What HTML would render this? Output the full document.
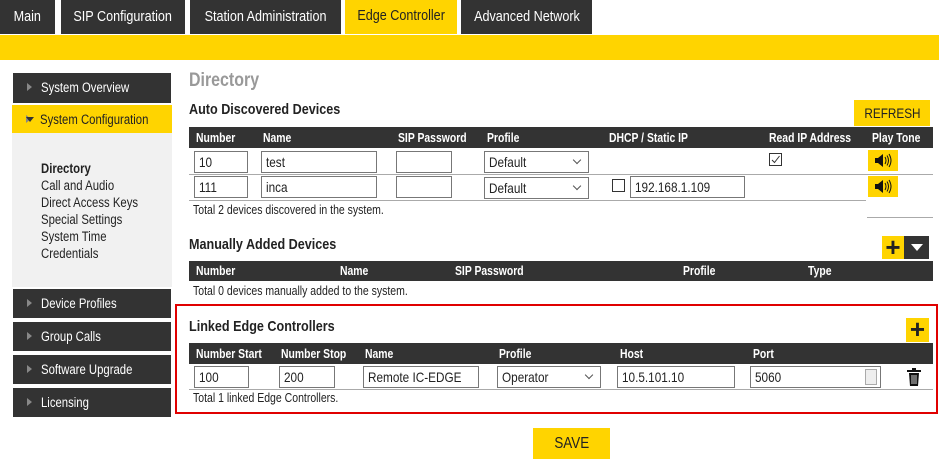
<!DOCTYPE html><html><head><style>
*{box-sizing:border-box;margin:0;padding:0}
body{width:939px;height:463px;background:#fff;position:relative;overflow:hidden;font-family:"Liberation Sans",sans-serif;font-size:13px;color:#222}
.a{position:absolute}
.c{display:inline-block;transform:scaleX(.84);transform-origin:0 50%;white-space:nowrap}
.cc{display:inline-block;transform:scaleX(.84);transform-origin:50% 50%;white-space:nowrap}
.tab{position:absolute;top:0;height:34px;background:#333;color:#fff;font-size:15px;line-height:34px;text-align:center}
.sb{position:absolute;left:13px;width:158px;height:29px;background:#333;color:#fff;font-size:13.5px;line-height:29px;padding-left:28px}
.sb:before{content:"";position:absolute;left:14px;top:10px;border-left:5px solid #888;border-top:4px solid transparent;border-bottom:4px solid transparent}
.hd{position:absolute;background:#333;color:#fff;font-weight:bold;font-size:13px;height:21px;line-height:21px}
.hd span{position:absolute;top:0;transform:scaleX(.8);transform-origin:0 50%;white-space:nowrap}
.in{position:absolute;height:22px;border:1px solid #777;background:#fff;font-size:14px;line-height:20px;padding-left:4px}
.sel:after{content:"";position:absolute;right:8px;top:5px;width:5px;height:5px;border-right:1px solid #555;border-bottom:1px solid #555;transform:rotate(45deg)}
.ln{position:absolute;height:1px;background:#aaa}
.y{background:#ffd400}
.h2{position:absolute;font-weight:bold;font-size:15px}
.sm{position:absolute;font-size:12.5px}
.spk{position:absolute;width:30px;height:21px;background:#ffd400}
.plus{position:absolute;background:#ffd400;font-size:26px;line-height:22px;text-align:center;font-family:"Liberation Sans",sans-serif;font-weight:bold}
</style></head><body>
<div class="tab" style="left:0;width:55px"><span class="cc">Main</span></div>
<div class="tab" style="left:61px;width:124px"><span class="cc">SIP Configuration</span></div>
<div class="tab" style="left:190px;width:151px"><span class="cc">Station Administration</span></div>
<div class="tab y" style="left:345px;width:112px;color:#222;line-height:32px"><span class="cc">Edge Controller</span></div>
<div class="tab" style="left:461px;width:131px"><span class="cc">Advanced Network</span></div>
<div class="a y" style="left:0;top:35px;width:939px;height:25px"></div>

<div class="sb" style="top:73px;height:30px"><span class="c">System Overview</span></div>
<div class="sb y" style="top:105px;left:12px;width:160px;color:#222"><span class="c">System Configuration</span></div>
<div class="a" style="left:26px;top:117px;border-top:5px solid #333;border-left:4px solid transparent;border-right:4px solid transparent"></div>
<div class="a" style="left:12px;top:133px;width:160px;height:154px;background:#f1f1f1"></div>
<div class="a" style="left:41px;top:160px;font-size:13.5px;line-height:17px;transform:scaleX(.84);transform-origin:0 0;white-space:nowrap"><b>Directory</b><br>Call and Audio<br>Direct Access Keys<br>Special Settings<br>System Time<br>Credentials</div>
<div class="sb" style="top:289px"><span class="c">Device Profiles</span></div>
<div class="sb" style="top:322px"><span class="c">Group Calls</span></div>
<div class="sb" style="top:355px"><span class="c">Software Upgrade</span></div>
<div class="sb" style="top:388px"><span class="c">Licensing</span></div>

<div class="a" style="left:189px;top:70px;font-size:19px;font-weight:bold;color:#999"><span class="c">Directory</span></div>
<div class="h2" style="left:189px;top:101px"><span class="c">Auto Discovered Devices</span></div>
<div class="a y" style="left:854px;top:100px;width:76px;height:26px;line-height:26px;text-align:center;font-size:14px"><span class="cc">REFRESH</span></div>
<div class="hd" style="left:189px;top:127px;width:744px"><span style="left:7px">Number</span><span style="left:74px">Name</span><span style="left:209px">SIP Password</span><span style="left:298px">Profile</span><span style="left:420px">DHCP / Static IP</span><span style="left:580px">Read IP Address</span><span style="left:683px">Play Tone</span></div>
<div class="in" style="left:194px;top:151px;width:54px"><span class="c">10</span></div>
<div class="in" style="left:261px;top:151px;width:116px"><span class="c">test</span></div>
<div class="in" style="left:396px;top:151px;width:56px"></div>
<div class="in sel" style="left:484px;top:151px;width:105px"><span class="c">Default</span></div>
<div class="a" style="left:769px;top:153px;width:13px;height:13px;border:1px solid #333"><svg width="11" height="11" style="position:absolute;left:0;top:0"><path d="M2 6l2.5 2.5L9.5 2" stroke="#333" fill="none" stroke-width="1"/></svg></div>
<div class="spk" style="left:868px;top:150px"><svg width="30" height="21"><path d="M7 8h3l5-4v13l-5-4H7z" fill="#111"/><path d="M17 7q2 3.5 0 7M19 5.5q3 5 0 10M21 4q4 6.5 0 13" stroke="#111" fill="none" stroke-width="1"/></svg></div>
<div class="ln" style="left:189px;top:174px;width:744px"></div>
<div class="in" style="left:194px;top:176px;width:54px"><span class="c">111</span></div>
<div class="in" style="left:261px;top:176px;width:116px"><span class="c">inca</span></div>
<div class="in" style="left:396px;top:176px;width:56px"></div>
<div class="in sel" style="left:484px;top:177px;width:105px"><span class="c">Default</span></div>
<div class="a" style="left:612px;top:179px;width:13px;height:13px;border:1px solid #333"></div>
<div class="in" style="left:630px;top:176px;width:115px"><span class="c">192.168.1.109</span></div>
<div class="spk" style="left:868px;top:176px"><svg width="30" height="21"><path d="M7 8h3l5-4v13l-5-4H7z" fill="#111"/><path d="M17 7q2 3.5 0 7M19 5.5q3 5 0 10M21 4q4 6.5 0 13" stroke="#111" fill="none" stroke-width="1"/></svg></div>
<div class="ln" style="left:189px;top:200px;width:677px"></div>
<div class="sm" style="left:193px;top:203px"><span class="c">Total 2 devices discovered in the system.</span></div>
<div class="ln" style="left:867px;top:217px;width:66px"></div>

<div class="h2" style="left:189px;top:236px"><span class="c">Manually Added Devices</span></div>
<div class="plus" style="left:882px;top:236px;width:22px;height:23px">+</div>
<div class="a" style="left:904px;top:236px;width:25px;height:23px;background:#333"></div>
<div class="a" style="left:911px;top:244px;border-top:7px solid #fff;border-left:6px solid transparent;border-right:6px solid transparent"></div>
<div class="hd" style="left:189px;top:261px;width:744px;height:20px;line-height:20px"><span style="left:7px">Number</span><span style="left:151px">Name</span><span style="left:266px">SIP Password</span><span style="left:494px">Profile</span><span style="left:619px">Type</span></div>
<div class="sm" style="left:193px;top:284px"><span class="c">Total 0 devices manually added to the system.</span></div>

<div class="a" style="left:175px;top:304px;width:763px;height:110px;border:2px solid #e00000"></div>
<div class="h2" style="left:189px;top:318px"><span class="c">Linked Edge Controllers</span></div>
<div class="plus" style="left:906px;top:318px;width:23px;height:24px">+</div>
<div class="hd" style="left:189px;top:343px;width:744px"><span style="left:7px">Number Start</span><span style="left:92px">Number Stop</span><span style="left:176px">Name</span><span style="left:310px">Profile</span><span style="left:431px">Host</span><span style="left:564px">Port</span></div>
<div class="in" style="left:194px;top:366px;width:55px"><span class="c">100</span></div>
<div class="in" style="left:279px;top:366px;width:56px"><span class="c">200</span></div>
<div class="in" style="left:363px;top:366px;width:116px"><span class="c">Remote IC-EDGE</span></div>
<div class="in sel" style="left:497px;top:366px;width:104px"><span class="c">Operator</span></div>
<div class="in" style="left:617px;top:366px;width:118px"><span class="c">10.5.101.10</span></div>
<div class="in" style="left:750px;top:366px;width:131px"><span class="c">5060</span></div>
<div class="a" style="left:865px;top:369px;width:12px;height:16px;border:1px solid #aaa;background:#eee"></div>
<div class="a" style="left:907px;top:368px;width:14px;height:18px"><svg width="14" height="18"><rect x="0" y="2" width="14" height="2" fill="#111"/><rect x="5" y="0" width="4" height="2" fill="#111"/><path d="M2 5h10l-1 13H3z" fill="#111"/><path d="M5 7v9M7 7v9M9 7v9" stroke="#fff" stroke-width=".8"/></svg></div>
<div class="ln" style="left:189px;top:389px;width:744px"></div>
<div class="sm" style="left:193px;top:391px"><span class="c">Total 1 linked Edge Controllers.</span></div>
<div class="a y" style="left:533px;top:428px;width:77px;height:31px;line-height:31px;text-align:center;font-size:16px"><span class="cc">SAVE</span></div>
</body></html>
